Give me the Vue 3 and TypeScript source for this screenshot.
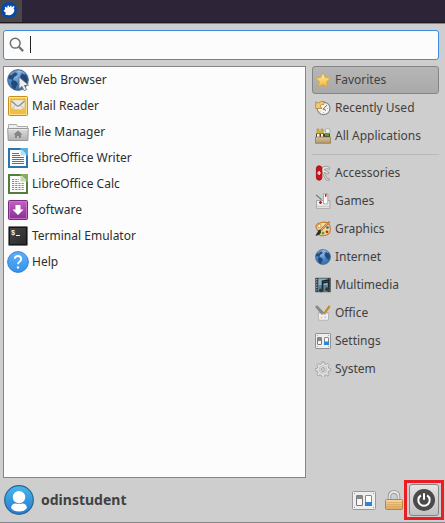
<script setup lang="ts">
import { ref } from 'vue'

interface Entry {
  label: string
  icon: string
}

const query = ref('')
const selected = ref('Favorites')

const globe = `<circle cx="11" cy="11" r="10.4" fill="url(#globe)" stroke="#3a5f8c" stroke-width=".8"/>
<path d="M3 5Q7 1 11 1.5L9 4l2 1-2 2-2 1-1 3-4-1-1-1z" fill="#234c7d"/>
<path d="M5 11l4 1 2 3-2 3-1 3-3-3-1-4zM14 3l4 1 3 6-2 5-3-2-2-3-1-3 2-2z" fill="#224a78"/>
<path d="M3.5 6Q10-1 18 5" stroke="#c3d8f0" stroke-width="1.6" fill="none" opacity=".55"/>`

const applications: Entry[] = [
  {
    label: 'Web Browser',
    icon: `${globe}<path d="M12 8v12l3-2.5 2.2 4.2 2.4-1.2-2.1-4 4-.4z" fill="#eee" stroke="#666" stroke-width=".8"/>`,
  },
  {
    label: 'Mail Reader',
    icon: `<rect x="1.5" y="1.5" width="19" height="19" rx="1" fill="url(#gold)" stroke="#c98f1c"/>
<rect x="2.6" y="2.6" width="16.8" height="16.8" fill="none" stroke="#ffe58f" stroke-width=".9"/>
<path d="M4 4.3h14V14H4z" fill="#f3e3bd" stroke="#cf9640" stroke-width=".8"/><path d="M4.5 6h13v8.5H4.5z" fill="#e9e9e7"/>
<path d="M4.5 6l5 4.5q1.500 1.200 3 0l5-4.500" fill="none" stroke="#8f8f8f" stroke-width="1.5"/>
<path d="M4.500 14l3.800-3.500M17.500 14l-3.800-3.500" fill="none" stroke="#b5b5b5" stroke-width=".9"/>
<path d="M3 13.500h4l1.200 1.500h5.600l1.200-1.500h4V19H3z" fill="#f3bd47"/>`,
  },
  {
    label: 'File Manager',
    icon: `<path d="M1.500 8V3.500h8l1 2h10V10h-19z" fill="#efefef" stroke="#aaa"/>
<path d="M.7 7.500h20.600l-.5 12H1.200z" fill="url(#folder)" stroke="#999"/>
<path d="M1.500 8.500h19" stroke="#eee" stroke-width=".8"/>
<path d="M11 9.500l4.500 4H14V17h-2v-2h-2v2H8v-3.500H6.500z" fill="#858585"/>`,
  },
  {
    label: 'LibreOffice Writer',
    icon: `<path d="M2 2h18v18H2z" fill="#fcfcfc" stroke="#2875af" stroke-width="2"/>
<path d="M13 1h8v8z" fill="#58aee2"/><path d="M13.500 2v6.500H20z" fill="#b5dcf3"/>
<path d="M5 6.500h7M5 8.500h8M5 10.500h12M5 12.500h12M5 14.500h12M5 16.500h12" stroke="#377eae" stroke-width="1"/>`,
  },
  {
    label: 'LibreOffice Calc',
    icon: `<path d="M2 2h18v18H2z" fill="#fcfcfc" stroke="#557c3e" stroke-width="2"/>
<path d="M13 1h8v8z" fill="#87ad65"/><path d="M13.500 2v6.500H20z" fill="#c5dbad"/>
<path d="M5 6.500h7M5 8.500h7M5 10.500h12M5 12.500h12M5 14.500h12M5 16.500h12" stroke="#7d9c63" stroke-width="1" stroke-dasharray="2.200 1"/>`,
  },
  {
    label: 'Software',
    icon: `<rect x="1.500" y="1.500" width="19" height="19" rx="1" fill="url(#purple)" stroke="#7a2a80"/>
<rect x="2.500" y="2.500" width="17" height="17" fill="none" stroke="#ce78cf" stroke-width=".8"/>
<path d="M8.500 6h5v4.500h3L11 16l-5.500-5.500h3z" fill="#fff"/>`,
  },
  {
    label: 'Terminal Emulator',
    icon: `<rect x="1.500" y="1.500" width="19" height="19" rx=".8" fill="#333" stroke="#777"/>
<rect x="2.500" y="2.500" width="17" height="17" fill="url(#term)" stroke="#161616"/>
<text x="4" y="10" fill="#eee" font-family="Liberation Mono, monospace" font-size="7" font-weight="bold">$</text>
<path d="M9 10.500h4" stroke="#eee" stroke-width="1"/>`,
  },
  {
    label: 'Help',
    icon: `<circle cx="11" cy="11" r="10.400" fill="url(#blue)" stroke="#2f7cc2" stroke-width=".9"/>
<path d="M7.800 7.800Q8 5 11 5t3.200 2.900Q14.200 9.600 12.500 10.700 11 11.700 11 13.300" fill="none" stroke="#fff" stroke-width="1.900"/>
<circle cx="11" cy="16.400" r="1.200" fill="#fff"/>`,
  },
]

const switches = `<rect x=".5" y=".5" width="15" height="15" rx=".6" fill="#eee" stroke="#909090"/>
<path d="M2 2.500h1M13 2.500h1M2 13.500h1M13 13.500h1" stroke="#aaa"/>
<rect x="2.500" y="4.500" width="4" height="7" rx=".5" fill="#f6f6f6" stroke="#777"/><path d="M2.500 4.500h4V8h-4z" fill="#888"/>
<rect x="9.500" y="4.500" width="4" height="7" rx=".5" fill="#fafafa" stroke="#888"/><path d="M9 8.500h5V12H9z" fill="#2b85d9"/>`

const shortcuts: Entry[] = [
  {
    label: 'Favorites',
    icon: `<path d="M8 .7l2.300 4.800 5.200.6-3.900 3.600 1.200 5.300L8 12.400 3.200 15l1.200-5.300L.5 6.100l5.200-.6z" fill="url(#star)" stroke="#d8a33c" stroke-width=".8" stroke-linejoin="round"/>`,
  },
  {
    label: 'Recently Used',
    icon: `<circle cx="8.600" cy="8.400" r="6.300" fill="#f5f5f2" stroke="#888" stroke-width="1.200"/>
<path d="M12 5L8.200 9.200M8 8.800l3 1.700" stroke="#666" stroke-width="1"/>
<path d="M13 8.500h-.8M8.600 13v-.8M5 11.500l.6-.6" stroke="#999"/>
<path d="M9 1.500Q6 .8 3.500 3L.7 1.800V8.500H7L5 5.800Q6.500 4 9 4.500z" fill="#edca76" stroke="#b9822d" stroke-width=".8"/>`,
  },
  {
    label: 'All Applications',
    icon: `<path d="M2 1h2v3h2V1h2v8H2z" fill="#e0bd25" stroke="#a98a23" stroke-width=".6"/>
<path d="M8.500 3h3v6h-3z" fill="#eee" stroke="#888" stroke-width=".5"/>
<circle cx="12.700" cy="3" r="2.500" fill="#eee" stroke="#999" stroke-width=".7"/>
<path d="M1 5.500h14V10H1z" fill="#4c4033"/><path d="M2 6h2.500v3H2zM6 6h2v3H6z" fill="#f3f0e5"/><path d="M10 5h4v3h-4z" fill="#56a02b"/>
<path d="M.5 9h15v6.300H.5z" fill="url(#box)" stroke="#8d7249" stroke-width=".7"/>`,
  },
]

const categories: Entry[] = [
  {
    label: 'Accessories',
    icon: `<path d="M7 2.500Q11 0 14.500 2.200v2Q11 3 9 4.500l5 3.100-1 1.600-4-2 3 6.300 2.200.2v1.500l-3.200-.2L6.500 6z" fill="#e6e6e6" stroke="#8e8e8e" stroke-width=".8"/>
<rect x="1.400" y=".8" width="5.400" height="14.400" rx="2.700" fill="#d51010" stroke="#970707" stroke-width=".8"/>
<path d="M4.100 6v4M2.300 8h3.600" stroke="#fff" stroke-width="1.200"/>`,
  },
  {
    label: 'Games',
    icon: `<path d="M1 2l5 4v2" stroke="#777" stroke-width="1.100" fill="none"/>
<path d="M1.500 7.500h13.300v7.800H1.500z" fill="#f1f1f0" stroke="#999" stroke-width=".8"/>
<path d="M8.500.7h4.300v10.200H8.500z" fill="#fafafa" stroke="#999" stroke-width=".8"/>
<path d="M10 1h1.500v2.700H10z" fill="#ce1111"/><path d="M5.500 8v3M4 9.500h3" stroke="#ce1111" stroke-width="1.300"/><path d="M1.500 13.200h13.300" stroke="#bbb"/>`,
  },
  {
    label: 'Graphics',
    icon: `<path d="M8 1.200Q14.500.8 15.300 7q.5 7.600-7 7.700-5.500.1-4.500-3 .7-1.600-1.600-3Q-2 2.500 8 1.200z" fill="#f5d8a0" stroke="#c17a21" stroke-width="1.100"/>
<circle cx="4.400" cy="5" r="1.700" fill="#fff" stroke="#c17a21" stroke-width=".8"/>
<circle cx="12.500" cy="6.600" r="1.400" fill="#376ead"/><circle cx="12" cy="10.800" r="1.400" fill="#d12217"/><circle cx="8" cy="12" r="1.500" fill="#54a921"/>
<path d="M14.500.8L5 10" stroke="#ad691d" stroke-width="2"/><path d="M14.300 1L6 9" stroke="#f1ca82" stroke-width=".8"/>
<path d="M5.800 9.500L4 8.400.5 14.600q3 .4 5.300-2.300z" fill="#282f2f"/>`,
  },
  { label: 'Internet', icon: `<g transform="scale(.727)">${globe}</g>` },
  {
    label: 'Multimedia',
    icon: `<path d="M.3.8h15.400v14.400H.3z" fill="#394145"/><path d="M3.300 1.500h9.400v13H3.300z" fill="#83b3c9"/>
<path d="M3.300 8h9.400v6.500H3.300z" fill="#5d8290"/><path d="M1.700 2v12M14.300 2v12" stroke="#aab3b6" stroke-width="1.100" stroke-dasharray="1.200 1.400"/>
<path d="M7.500 12.800V4.200l6.300-1.300v8.800M7.500 6l6.300-1.300" fill="none" stroke="#20272b" stroke-width="1.600"/>
<ellipse cx="6.200" cy="13.300" rx="2.300" ry="1.900" fill="#31383b"/><ellipse cx="12.500" cy="12.200" rx="2.300" ry="1.900" fill="#31383b"/>`,
  },
  {
    label: 'Office',
    icon: `<path d="M3.200 7.500h10.600l-.5 7.700H3.800z" fill="#f6f6f3" stroke="#aaa" stroke-width=".8"/>
<path d="M.6 1.800L2.200.8l6.600 7-1.800 1.800z" fill="#8c8c86" stroke="#666" stroke-width=".6"/><path d="M14.700 1L9 8.800" stroke="#c38b2d" stroke-width="2.200"/>
<path d="M4 8.500q4.500 2.500 9 0" stroke="#bbb" fill="none" stroke-width=".8"/><path d="M5.500 11.500h2v2h-2z" fill="#f3c3a0"/><path d="M9 11h2.500v2.500H9z" fill="#c5d8ea"/>`,
  },
  { label: 'Settings', icon: switches },
  {
    label: 'System',
    icon: `<path d="M7 .8h2l.5 2 1.600.7 1.800-1.100 1.400 1.400-1.100 1.900.6 1.500 2 .5v1.900l-2 .5-.7 1.600 1.200 1.800-1.400 1.400-1.800-1.100-1.600.7-.5 2H7l-.5-2-1.600-.7-1.800 1.100-1.400-1.400 1.100-1.800-.6-1.600-2-.5V7.700l2-.5.7-1.500-1.200-1.900 1.400-1.400 1.800 1.100L6.500 2.800z" fill="#e0e0e0" stroke="#999" stroke-width=".8"/>
<circle cx="8" cy="8.500" r="3.800" fill="none" stroke="#bbb" stroke-width=".8"/><circle cx="8" cy="8.500" r="2" fill="#ccc" stroke="#999" stroke-width=".8"/>`,
  },
]
</script>

<template>
  <div class="desktop">
    <svg class="defs" aria-hidden="true">
      <defs>
        <radialGradient id="globe" cx=".4" cy=".25" r=".8"><stop stop-color="#94bce8" /><stop offset=".55" stop-color="#4a86c6" /><stop offset="1" stop-color="#3768a5" /></radialGradient>
        <linearGradient id="gold" x2="0" y2="1"><stop stop-color="#f9d771" /><stop offset="1" stop-color="#eeb02d" /></linearGradient>
        <linearGradient id="folder" x2="0" y2="1"><stop stop-color="#dedede" /><stop offset="1" stop-color="#b2b2b2" /></linearGradient>
        <linearGradient id="purple" x2="0" y2="1"><stop stop-color="#c163c4" /><stop offset="1" stop-color="#8c2b91" /></linearGradient>
        <linearGradient id="term" x2="1" y2="1"><stop stop-color="#464646" /><stop offset="1" stop-color="#2a2a2a" /></linearGradient>
        <linearGradient id="blue" x2="0" y2="1"><stop stop-color="#5eb0fa" /><stop offset="1" stop-color="#3593ea" /></linearGradient>
        <linearGradient id="star" x2="0" y2="1"><stop stop-color="#ffef99" /><stop offset="1" stop-color="#f3b83d" /></linearGradient>
        <linearGradient id="box" x2="0" y2="1"><stop stop-color="#d8c39c" /><stop offset="1" stop-color="#b0956b" /></linearGradient>
        <linearGradient id="user" x2="0" y2="1"><stop stop-color="#46b8ed" /><stop offset="1" stop-color="#2a78d0" /></linearGradient>
        <linearGradient id="lock" x2="0" y2="1"><stop stop-color="#f5d8a6" /><stop offset="1" stop-color="#dda75a" /></linearGradient>
      </defs>
    </svg>

    <header class="panel">
      <button class="launcher" aria-label="Applications">
        <svg width="16" height="16" viewBox="0 0 16 16">
          <circle cx="8" cy="8" r="8" fill="#0848aa" />
          <path d="M2.600 8.200l1.600-.6-.4-2.300 1.200-.5 1.200 1.400.3-2.400 1.200-.3.800 1.900 1.200-2 1 .5-.2 1.700 2.200-1.700.9.7-1 2.200.9 1.300-.5 1.600q-1.500 3.300-5 3.500l-3.600-.4.3-2.200-1.300-.8z" fill="#fff" />
        </svg>
      </button>
    </header>

    <main class="menu">
      <label class="search">
        <svg width="16" height="16" viewBox="0 0 16 16">
          <circle cx="6.200" cy="6.200" r="4.900" fill="none" stroke="#707070" stroke-width="1.500" />
          <path d="M9.800 9.800l4.300 4.300" stroke="#707070" stroke-width="2.200" />
        </svg>
        <span class="caret"></span>
        <input v-model="query" type="text" aria-label="Search" />
      </label>

      <section class="columns">
        <ul class="apps">
          <li v-for="app in applications" :key="app.label">
            <svg width="22" height="22" viewBox="0 0 22 22" v-html="app.icon"></svg>
            <span class="label">{{ app.label }}</span>
          </li>
        </ul>

        <nav class="sidebar">
          <button
            v-for="item in shortcuts"
            :key="item.label"
            class="category"
            :class="{ active: selected === item.label }"
            @click="selected = item.label"
          >
            <svg width="16" height="16" viewBox="0 0 16 16" v-html="item.icon"></svg>
            <span class="label">{{ item.label }}</span>
          </button>
          <div class="separator"></div>
          <button
            v-for="item in categories"
            :key="item.label"
            class="category"
            :class="{ active: selected === item.label }"
            @click="selected = item.label"
          >
            <svg width="16" height="16" viewBox="0 0 16 16" v-html="item.icon"></svg>
            <span class="label">{{ item.label }}</span>
          </button>
        </nav>
      </section>

      <footer class="footer">
        <svg width="30" height="30" viewBox="0 0 30 30">
          <circle cx="15" cy="15" r="14.300" fill="url(#user)" stroke="#276890" stroke-width="1.200" />
          <circle cx="15" cy="12.200" r="6.200" fill="#fff" />
          <path d="M7 22.700q1-4.500 5-4.200 3 1.200 6 0 4-.3 5 4.200-2.200 3.800-8 3.800t-8-3.800z" fill="#fff" />
        </svg>
        <strong class="user">odinstudent</strong>
        <button class="action settings" aria-label="Settings">
          <svg width="24" height="20" viewBox="0 0 24 20">
            <rect x=".5" y="1.500" width="23" height="18" rx="1" fill="#eee" stroke="#999" />
            <path d="M2 3.500h1M21 3.500h1M2 17.500h1M21 17.500h1" stroke="#999" />
            <rect x="4.500" y="5.500" width="6" height="10" rx=".5" fill="#f7f7f7" stroke="#777" />
            <path d="M4.500 5.500h6v3.500h-6z" fill="#888" />
            <rect x="13.500" y="5.500" width="6" height="10" rx=".5" fill="#fff" stroke="#888" />
            <path d="M13 12h7v4h-7z" fill="#3382d1" />
          </svg>
        </button>
        <button class="action lock" aria-label="Lock screen">
          <svg width="18" height="20" viewBox="0 0 18 20">
            <path d="M4.500 10V6.500q0-4.500 4.500-4.500t4.500 4.500V10" fill="none" stroke="#8d8d8d" stroke-width="3.400" />
            <path d="M4.500 10V6.500q0-4.500 4.500-4.500t4.500 4.500V10" fill="none" stroke="#e6e6e6" stroke-width="1.800" />
            <rect x=".5" y="9.500" width="17" height="10" rx="1" fill="url(#lock)" stroke="#b9853b" />
            <path d="M1.500 12.500h15M1.500 14.500h15M1.500 16.500h15" stroke="#d09d55" stroke-width=".5" />
          </svg>
        </button>
        <div class="highlight">
          <button class="power" aria-label="Log out">
            <svg width="22" height="22" viewBox="0 0 22 22">
              <circle cx="11" cy="11" r="11" fill="#4b4b4b" />
              <path d="M7.900 6.300a5.700 5.700 0 1 0 6.200 0M11 4.300v6.500" fill="none" stroke="#fff" stroke-width="2" />
            </svg>
          </button>
        </div>
      </footer>
    </main>
  </div>
</template>

<style>
body {
  margin: 0;
  overflow: hidden;
}
</style>

<style scoped>
.desktop {
  display: flex;
  flex-direction: column;
  width: 445px;
  height: 523px;
  box-sizing: border-box;
  background: #cecece;
  color: #2e2e2e;
  font-family: "Noto Sans", sans-serif;
  font-size: 12px;
}
.desktop *,
.desktop *::before {
  box-sizing: border-box;
}
.defs {
  position: absolute;
  width: 0;
  height: 0;
}
svg {
  flex: none;
  display: block;
}
button {
  font: inherit;
  color: inherit;
  background: none;
  border: 0;
  margin: 0;
  padding: 0;
}
.panel {
  height: 23px;
  flex: none;
  background: #2d2438;
  border-bottom: 1px solid #1c1823;
}
.launcher {
  display: flex;
  align-items: flex-start;
  width: 22px;
  height: 22px;
  padding: 2px 0 0 1px;
  background: #48484a;
}
.menu {
  flex: 1;
  display: flex;
  flex-direction: column;
  border-top: 1px solid #858585;
  border-bottom: 1px solid #858585;
  padding: 6px 6px 0 3px;
}
.search {
  display: flex;
  align-items: center;
  height: 30px;
  flex: none;
  padding-left: 5px;
  background: #fcfcfc;
  border: 1px solid #3d8ee2;
  border-radius: 3px;
}
.caret {
  width: 1px;
  height: 17px;
  margin: 0 0 1px 5px;
  background: #222;
}
.search input {
  flex: 1;
  min-width: 0;
  padding: 0 4px;
  border: 0;
  outline: 0;
  background: transparent;
  font: inherit;
}
.columns {
  display: flex;
  gap: 6px;
  height: 412px;
  margin-top: 6px;
  flex: none;
}
.apps {
  width: 303px;
  margin: 0;
  padding: 0 0 0 3px;
  list-style: none;
  background: #fcfcfc;
  border: 1px solid #858585;
}
.apps li {
  display: flex;
  align-items: center;
  gap: 3px;
  height: 26px;
}
.label {
  padding-bottom: 1px;
}
.sidebar {
  width: 127px;
}
.category {
  display: flex;
  align-items: center;
  gap: 4px;
  width: 100%;
  height: 28px;
  padding: 0 2px;
  border: 1px solid transparent;
  border-radius: 3px;
  color: #414141;
  text-align: left;
  white-space: nowrap;
}
.category.active {
  background: linear-gradient(#b6b6b6, #a9a9a9);
  border-color: #858585;
}
.separator {
  height: 1px;
  margin: 4px 0;
  background: #b9b9b9;
}
.footer {
  display: flex;
  align-items: center;
  height: 44px;
  padding-left: 1px;
}
.user {
  flex: 1;
  margin-left: 7px;
  padding-bottom: 1px;
  font-size: 14px;
  color: #414141;
}
.lock {
  margin-left: 9px;
}
.highlight {
  width: 40px;
  height: 40px;
  margin: 0 -5px 0 1px;
  padding: 1px 2px;
  border: 3px solid #ec1c24;
}
.power {
  display: grid;
  place-items: center;
  width: 30px;
  height: 32px;
  background: linear-gradient(#e4e4e4, #c2c2c2);
  border: 1px solid #858585;
  border-radius: 3px;
}
</style>
